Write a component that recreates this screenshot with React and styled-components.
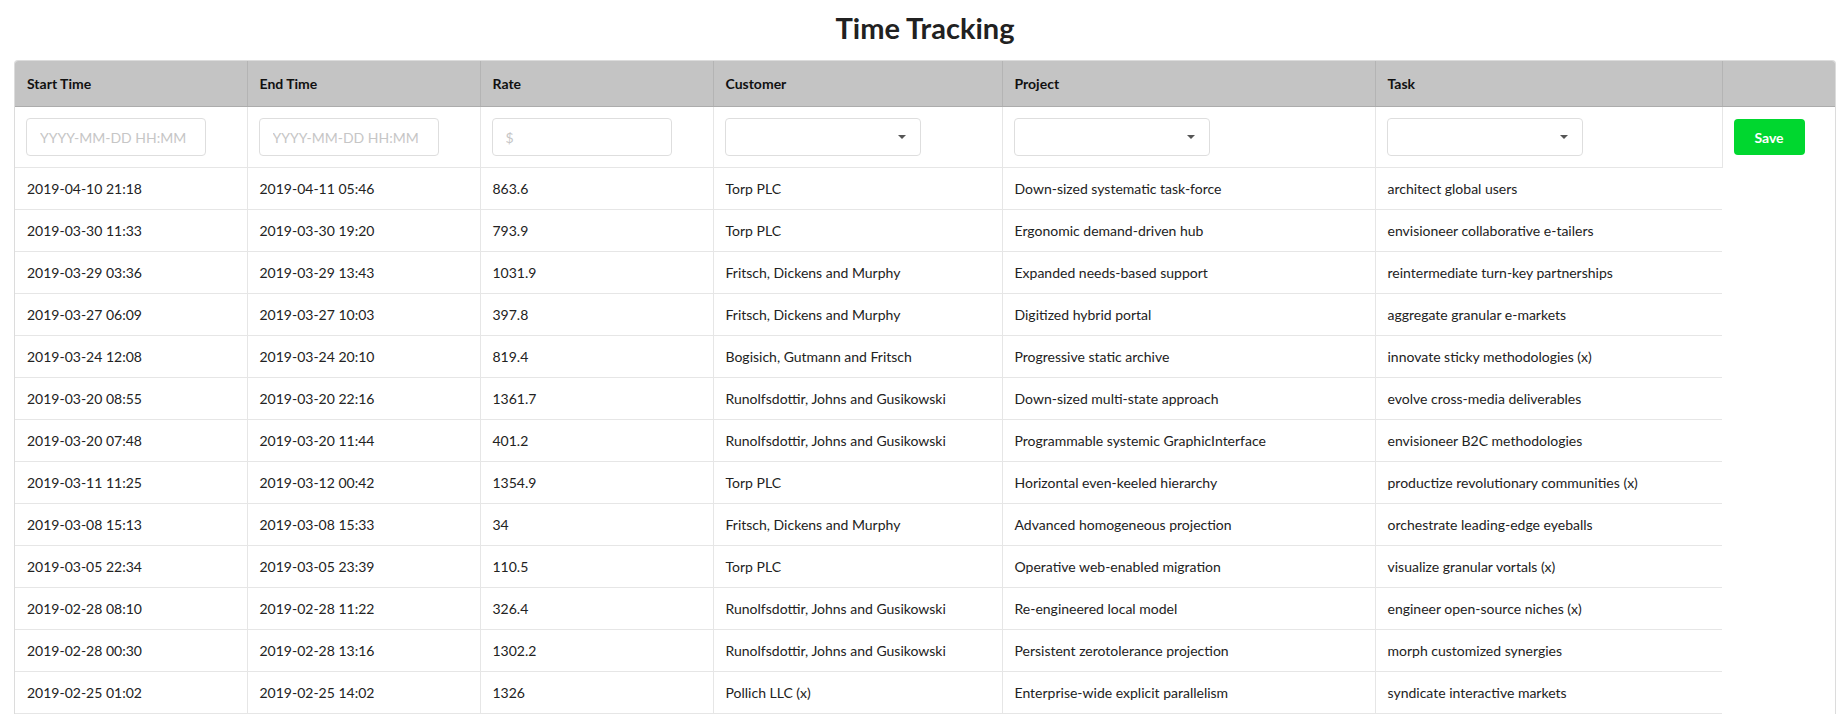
import React from 'react';
import styled, { createGlobalStyle } from 'styled-components';

const GlobalStyle = createGlobalStyle`
    body {
        margin: 0;
        background: #fff;
        font-family: Lato, "Open Sans", sans-serif;
        color: #222;
    }
`

const COLS = [232, 233, 233, 289, 373, 347]

const rows = [
    ['2019-04-10 21:18', '2019-04-11 05:46', '863.6', 'Torp PLC', 'Down-sized systematic task-force', 'architect global users'],
    ['2019-03-30 11:33', '2019-03-30 19:20', '793.9', 'Torp PLC', 'Ergonomic demand-driven hub', 'envisioneer collaborative e-tailers'],
    ['2019-03-29 03:36', '2019-03-29 13:43', '1031.9', 'Fritsch, Dickens and Murphy', 'Expanded needs-based support', 'reintermediate turn-key partnerships'],
    ['2019-03-27 06:09', '2019-03-27 10:03', '397.8', 'Fritsch, Dickens and Murphy', 'Digitized hybrid portal', 'aggregate granular e-markets'],
    ['2019-03-24 12:08', '2019-03-24 20:10', '819.4', 'Bogisich, Gutmann and Fritsch', 'Progressive static archive', 'innovate sticky methodologies (x)'],
    ['2019-03-20 08:55', '2019-03-20 22:16', '1361.7', 'Runolfsdottir, Johns and Gusikowski', 'Down-sized multi-state approach', 'evolve cross-media deliverables'],
    ['2019-03-20 07:48', '2019-03-20 11:44', '401.2', 'Runolfsdottir, Johns and Gusikowski', 'Programmable systemic GraphicInterface', 'envisioneer B2C methodologies'],
    ['2019-03-11 11:25', '2019-03-12 00:42', '1354.9', 'Torp PLC', 'Horizontal even-keeled hierarchy', 'productize revolutionary communities (x)'],
    ['2019-03-08 15:13', '2019-03-08 15:33', '34', 'Fritsch, Dickens and Murphy', 'Advanced homogeneous projection', 'orchestrate leading-edge eyeballs'],
    ['2019-03-05 22:34', '2019-03-05 23:39', '110.5', 'Torp PLC', 'Operative web-enabled migration', 'visualize granular vortals (x)'],
    ['2019-02-28 08:10', '2019-02-28 11:22', '326.4', 'Runolfsdottir, Johns and Gusikowski', 'Re-engineered local model', 'engineer open-source niches (x)'],
    ['2019-02-28 00:30', '2019-02-28 13:16', '1302.2', 'Runolfsdottir, Johns and Gusikowski', 'Persistent zerotolerance projection', 'morph customized synergies'],
    ['2019-02-25 01:02', '2019-02-25 14:02', '1326', 'Pollich LLC (x)', 'Enterprise-wide explicit parallelism', 'syndicate interactive markets'],
]

const Page = styled.div`
    padding: 0 8px 0 14px;
`

const Title = styled.h1`
    margin: 0 0 4px;
    font-family: Lato, sans-serif;
    font-size: 29px;
    font-weight: 700;
    line-height: 56px;
    text-align: center;
    color: #212121;
`

const TableWrap = styled.div`
    border: 1px solid #dcdcdc;
    border-bottom: none;
    border-radius: 4px 4px 0 0;
    overflow: hidden;
`

const Table = styled.table`
    width: 100%;
    border-collapse: collapse;
    table-layout: fixed;
    font-size: 14px;
`

const Th = styled.th`
    height: 45px;
    padding: 0 12px;
    background: #c4c4c4;
    border-bottom: 1px solid #acacac;
    text-align: left;
    font-weight: 700;
    color: #111;
    &:not(:last-child) {
        border-right: 1px solid #b4b4b4;
    }
`

const Td = styled.td`
    height: 41px;
    padding: 0 12px;
    border-bottom: 1px solid #e6e6e6;
    color: #222;
    white-space: nowrap;
    &:not(:last-child) {
        border-right: 1px solid #e6e6e6;
    }
`

const FormTd = styled(Td)`
    height: 60px;
    padding: 0 11px;
    border-bottom: ${p => p.bare ? 'none' : '1px solid #e6e6e6'};
`

const Input = styled.input`
    box-sizing: border-box;
    width: 180px;
    height: 38px;
    padding: 0 13px;
    border: 1px solid #dedede;
    border-radius: 4px;
    font-family: Lato, sans-serif;
    font-size: 14px;
    outline: none;
    &::placeholder {
        color: #c6c6c6;
    }
`

const SelectBox = styled.div`
    box-sizing: border-box;
    display: flex;
    justify-content: flex-end;
    align-items: center;
    width: 196px;
    height: 38px;
    padding: 0 14px;
    border: 1px solid #dedede;
    border-radius: 4px;
    background: #fff;
`

const Caret = styled.span`
    width: 0;
    height: 0;
    border-left: 4px solid transparent;
    border-right: 4px solid transparent;
    border-top: 4px solid #555;
`

const SaveButton = styled.button`
    width: 71px;
    height: 36px;
    border: none;
    border-radius: 4px;
    background: #00d72f;
    color: #fff;
    font-family: Lato, sans-serif;
    font-size: 14px;
    font-weight: 700;
    cursor: pointer;
`

const Select = () => (
    <SelectBox>
        <Caret />
    </SelectBox>
)

export default function App() {
    return (
        <>
            <GlobalStyle />
            <Page>
                <Title>Time Tracking</Title>
                <TableWrap>
                    <Table>
                        <colgroup>
                            {COLS.map((w, i) => <col key={i} style={{ width: w }} />)}
                            <col />
                        </colgroup>
                        <thead>
                            <tr>
                                <Th>Start Time</Th>
                                <Th>End Time</Th>
                                <Th>Rate</Th>
                                <Th>Customer</Th>
                                <Th>Project</Th>
                                <Th>Task</Th>
                                <Th />
                            </tr>
                        </thead>
                        <tbody>
                            <tr>
                                <FormTd><Input placeholder="YYYY-MM-DD HH:MM" /></FormTd>
                                <FormTd><Input placeholder="YYYY-MM-DD HH:MM" /></FormTd>
                                <FormTd><Input placeholder="$" /></FormTd>
                                <FormTd><Select /></FormTd>
                                <FormTd><Select /></FormTd>
                                <FormTd><Select /></FormTd>
                                <FormTd bare><SaveButton>Save</SaveButton></FormTd>
                            </tr>
                            {rows.map((r, i) => (
                                <tr key={i}>
                                    {r.map((c, j) => <Td key={j}>{c}</Td>)}
                                </tr>
                            ))}
                        </tbody>
                    </Table>
                </TableWrap>
            </Page>
        </>
    )
}
